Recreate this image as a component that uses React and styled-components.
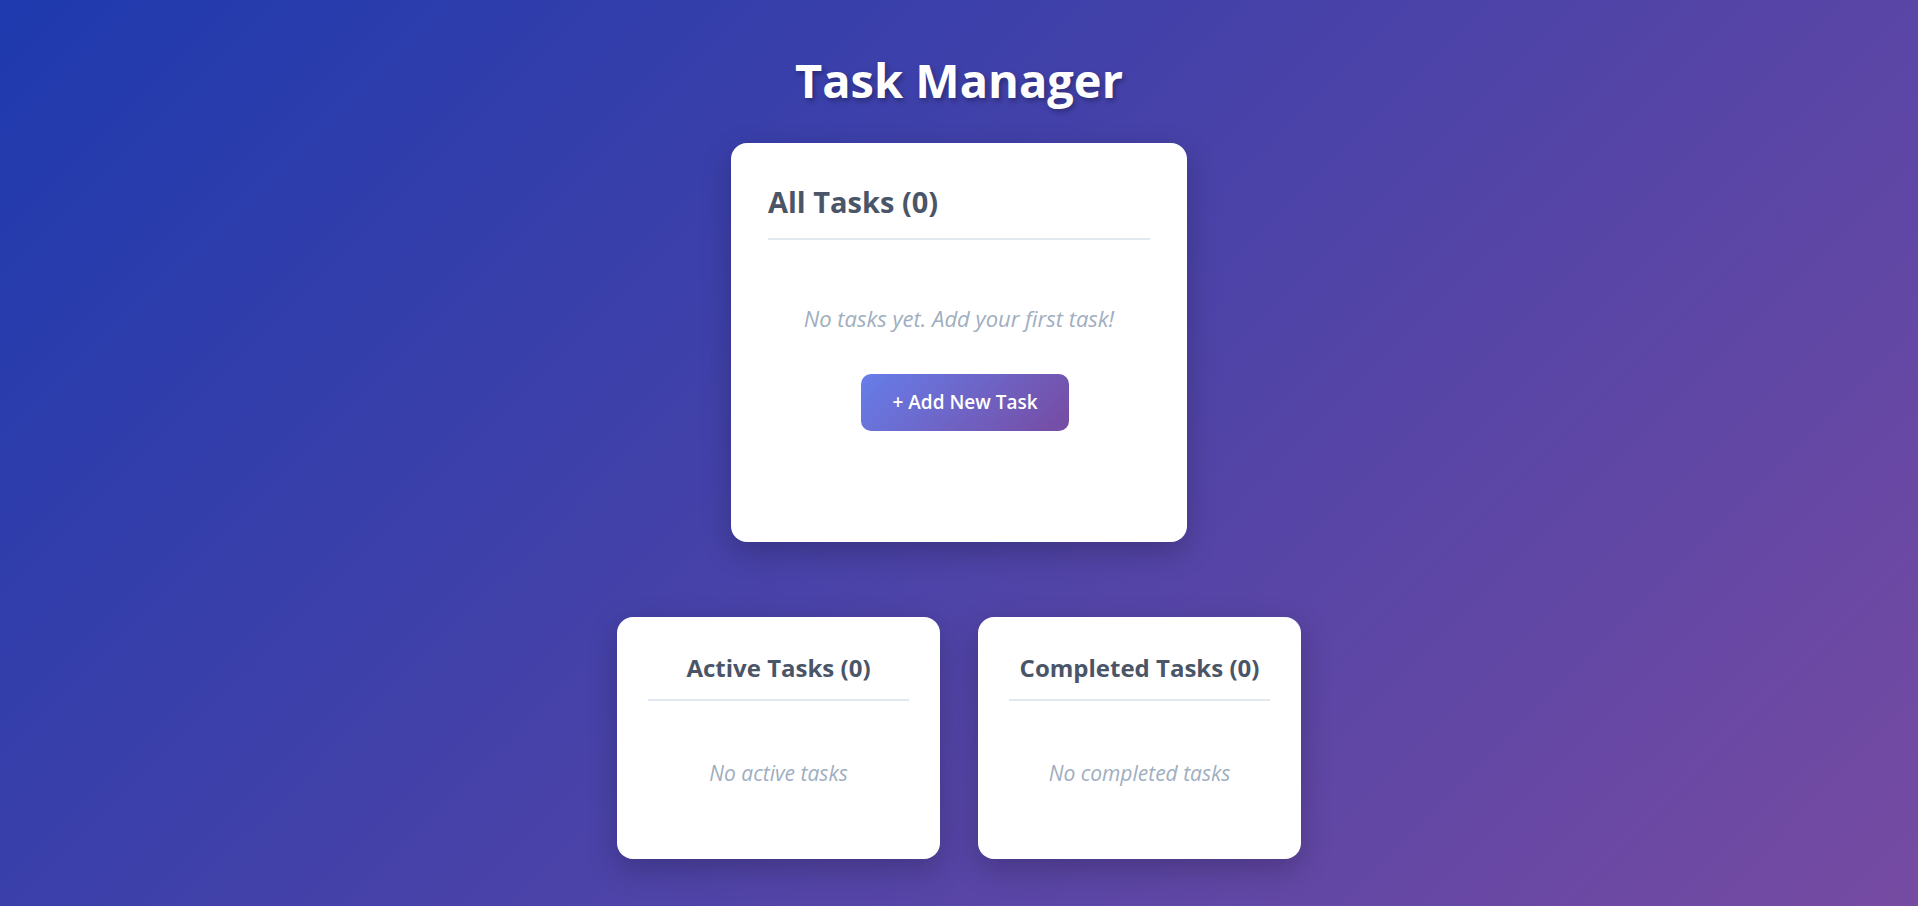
import React from 'react';
import styled, { createGlobalStyle } from 'styled-components';

const GlobalStyle = createGlobalStyle`
  html, body {
    margin: 0;
    padding: 0;
  }
  body {
    font-family: "Open Sans", "Noto Sans", sans-serif;
  }
  * {
    box-sizing: border-box;
  }
`;

const Page = styled.div`
  min-height: 100vh;
  background: linear-gradient(135deg, #1e3aae 0%, #764ba2 100%);
  display: flex;
  flex-direction: column;
  align-items: center;
  padding-top: 52px;
`;

const Title = styled.h1`
  margin: 0 0 35px;
  font-size: 47px;
  line-height: 1.2;
  font-weight: 700;
  color: #fff;
  text-shadow: 2px 3px 5px rgba(0, 0, 0, 0.3);
`;

const Card = styled.section`
  background: #fff;
  border-radius: 16px;
  box-shadow: 0 10px 30px rgba(0, 0, 0, 0.22);
  width: ${p => (p.$main ? '456px' : '323px')};
  height: ${p => (p.$main ? '399px' : '242px')};
  padding: ${p => (p.$main ? '42px 37px' : '37px 31px')};
  display: flex;
  flex-direction: column;
`;

const CardTitle = styled.h2`
  margin: 0;
  color: #4a5568;
  font-weight: 700;
  font-size: ${p => (p.$main ? '29px' : '24px')};
  line-height: 1.2;
  text-align: ${p => (p.$main ? 'left' : 'center')};
  padding-bottom: ${p => (p.$main ? '18px' : '16px')};
  border-bottom: 2px solid #e2e8f0;
`;

const Empty = styled.div`
  display: flex;
  flex-direction: column;
  align-items: center;
  padding-top: ${p => (p.$main ? '62px' : '57px')};
`;

const EmptyText = styled.p`
  margin: 0;
  color: #a0aec0;
  font-style: italic;
  font-size: ${p => (p.$main ? '22px' : '21px')};
  line-height: 1.5;
  text-align: center;
`;

const AddButton = styled.button`
  margin: 39px 0 0 12px;
  border: none;
  border-radius: 10px;
  padding: 16px 31px;
  font-family: inherit;
  font-size: 19px;
  line-height: 25px;
  font-weight: 600;
  color: #fff;
  background: linear-gradient(135deg, #667eea 0%, #764ba2 100%);
  cursor: pointer;
`;

const Row = styled.div`
  display: flex;
  gap: 38px;
  margin-top: 75px;
`;

export default function App() {
  return (
    <>
      <GlobalStyle />
      <Page>
        <Title>Task Manager</Title>
        <Card $main>
          <CardTitle $main>All Tasks (0)</CardTitle>
          <Empty $main>
            <EmptyText $main>No tasks yet. Add your first task!</EmptyText>
            <AddButton>+ Add New Task</AddButton>
          </Empty>
        </Card>
        <Row>
          <Card>
            <CardTitle>Active Tasks (0)</CardTitle>
            <Empty>
              <EmptyText>No active tasks</EmptyText>
            </Empty>
          </Card>
          <Card>
            <CardTitle>Completed Tasks (0)</CardTitle>
            <Empty>
              <EmptyText>No completed tasks</EmptyText>
            </Empty>
          </Card>
        </Row>
      </Page>
    </>
  );
}
